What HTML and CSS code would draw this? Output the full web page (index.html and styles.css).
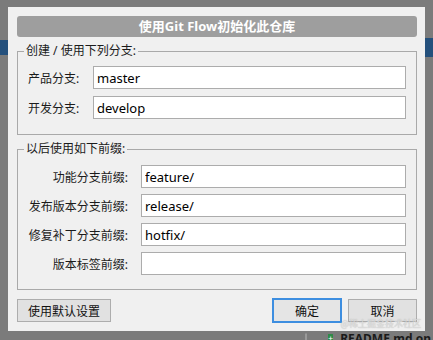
FILE: index.html
```html
<!DOCTYPE html>
<html lang="zh-CN">
<head>
    <meta charset="UTF-8">
    <meta name="viewport" content="width=device-width, initial-scale=1.0">
    <title>使用Git Flow初始化此仓库</title>
    <link rel="stylesheet" href="styles.css">
</head>
<body>
    <div class="dialog">
        <div class="title">使用Git Flow初始化此仓库</div>

        <fieldset class="group">
            <legend>创建 / 使用下列分支:</legend>
            <div class="row branch">
                <label for="master">产品分支:</label>
                <input type="text" id="master" value="master">
            </div>
            <div class="row branch">
                <label for="develop">开发分支:</label>
                <input type="text" id="develop" value="develop">
            </div>
        </fieldset>

        <fieldset class="group prefixes">
            <legend>以后使用如下前缀:</legend>
            <div class="row prefix">
                <label for="feature">功能分支前缀:</label>
                <input type="text" id="feature" value="feature/">
            </div>
            <div class="row prefix">
                <label for="release">发布版本分支前缀:</label>
                <input type="text" id="release" value="release/">
            </div>
            <div class="row prefix">
                <label for="hotfix">修复补丁分支前缀:</label>
                <input type="text" id="hotfix" value="hotfix/">
            </div>
            <div class="row prefix">
                <label for="tag">版本标签前缀:</label>
                <input type="text" id="tag" value="">
            </div>
        </fieldset>

        <div class="buttons">
            <button type="button" class="btn defaults">使用默认设置</button>
            <span class="spacer"></span>
            <button type="button" class="btn ok">确定</button>
            <button type="button" class="btn cancel">取消</button>
        </div>

        <span class="watermark">@稀土掘金技术社区</span>
    </div>

    <div class="taskbar">
        <span class="tab-corner"></span>
        <span class="file-icon">+</span>
        <span class="file-name">README.md on ma</span>
    </div>
</body>
</html>
```

FILE: styles.css
```css
body {
    margin: 0;
    width: 433px;
    height: 340px;
    overflow: hidden;
    font-family: "Noto Sans", "Noto Sans CJK SC", sans-serif;
    font-size: 12px;
    color: #1b1b1b;
    background:
        linear-gradient(#24507c, #24507c) 0 40px / 8px 15px no-repeat,
        linear-gradient(#24507c, #24507c) 425px 38px / 8px 19px no-repeat,
        #7b7b7b;
}
.dialog {
    position: relative;
    box-sizing: border-box;
    width: 417px;
    height: 324px;
    margin: 7px 0 0 8px;
    padding: 9px 8px 0 9px;
    background: #f0f0f0;
}
.title {
    height: 21px;
    line-height: 21px;
    border-radius: 3px;
    background: #9e9e9e;
    color: #fff;
    font-size: 13px;
    font-weight: bold;
    text-align: center;
}
.group {
    margin: 6px 0 0 0;
    padding: 7px 10px 15px 6px;
    border: 1px solid #a9a9a9;
    border-radius: 0;
    min-width: 0;
}
.group legend {
    padding: 0 2px;
    height: 16px;
    line-height: 16px;
    font-size: 12px;
}
.row {
    display: flex;
    align-items: center;
    margin-left: 4px;
}
.row + .row {
    margin-top: 7px;
}
.row label {
    flex-shrink: 0;
    font-size: 12px;
}
.branch label {
    width: 65px;
}
.prefix label {
    width: 113px;
    padding-right: 13px;
    box-sizing: border-box;
    text-align: right;
}
.prefixes {
    padding-top: 8px;
    padding-bottom: 14px;
}
.prefixes .row + .row {
    margin-top: 6px;
}
.prefixes .row:first-of-type {
    margin-bottom: 1px;
}
.row input {
    flex: 1;
    min-width: 0;
    box-sizing: border-box;
    height: 23px;
    padding: 0 3px;
    border: 1px solid #acacac;
    border-radius: 0;
    background: #fff;
    font-family: "Noto Sans", "Noto Sans CJK SC", sans-serif;
    font-size: 13px;
    color: #000;
    outline: none;
}
.buttons {
    display: flex;
    align-items: center;
    gap: 6px;
    margin-top: 8px;
}
.spacer {
    flex: 1;
}
.btn {
    box-sizing: border-box;
    height: 23px;
    padding: 0;
    border: 1px solid #adadad;
    border-radius: 0;
    background: #e1e1e1;
    font-family: "Noto Sans CJK SC", sans-serif;
    font-size: 12px;
    color: #111;
}
.defaults {
    width: 94px;
}
.ok {
    width: 70px;
    height: 25px;
    border: 2px solid #3d8ee0;
    background: #e5e5e5;
}
.cancel {
    width: 69px;
}
.watermark {
    position: absolute;
    right: 4px;
    bottom: 1px;
    font-family: "Noto Sans CJK SC", sans-serif;
    font-size: 9px;
    color: rgba(230, 230, 230, 0.85);
    text-shadow: 0 0 1px rgba(120, 120, 120, 0.6);
}
.taskbar {
    display: flex;
    align-items: flex-start;
    height: 9px;
    overflow: hidden;
    padding-left: 305px;
}
.tab-corner {
    width: 7px;
    height: 12px;
    margin-top: 2px;
    border: 1px solid #9a9a9a;
    border-radius: 3px;
    box-sizing: border-box;
}
.file-icon {
    width: 8px;
    height: 10px;
    margin: 3px 0 0 21px;
    background: #2f8a4a;
    color: #fff;
    font-size: 9px;
    line-height: 10px;
    text-align: center;
}
.file-name {
    margin: 1px 0 0 7px;
    font-weight: bold;
    font-size: 12px;
    line-height: 14px;
    color: #1a1a1a;
    white-space: nowrap;
}
```
